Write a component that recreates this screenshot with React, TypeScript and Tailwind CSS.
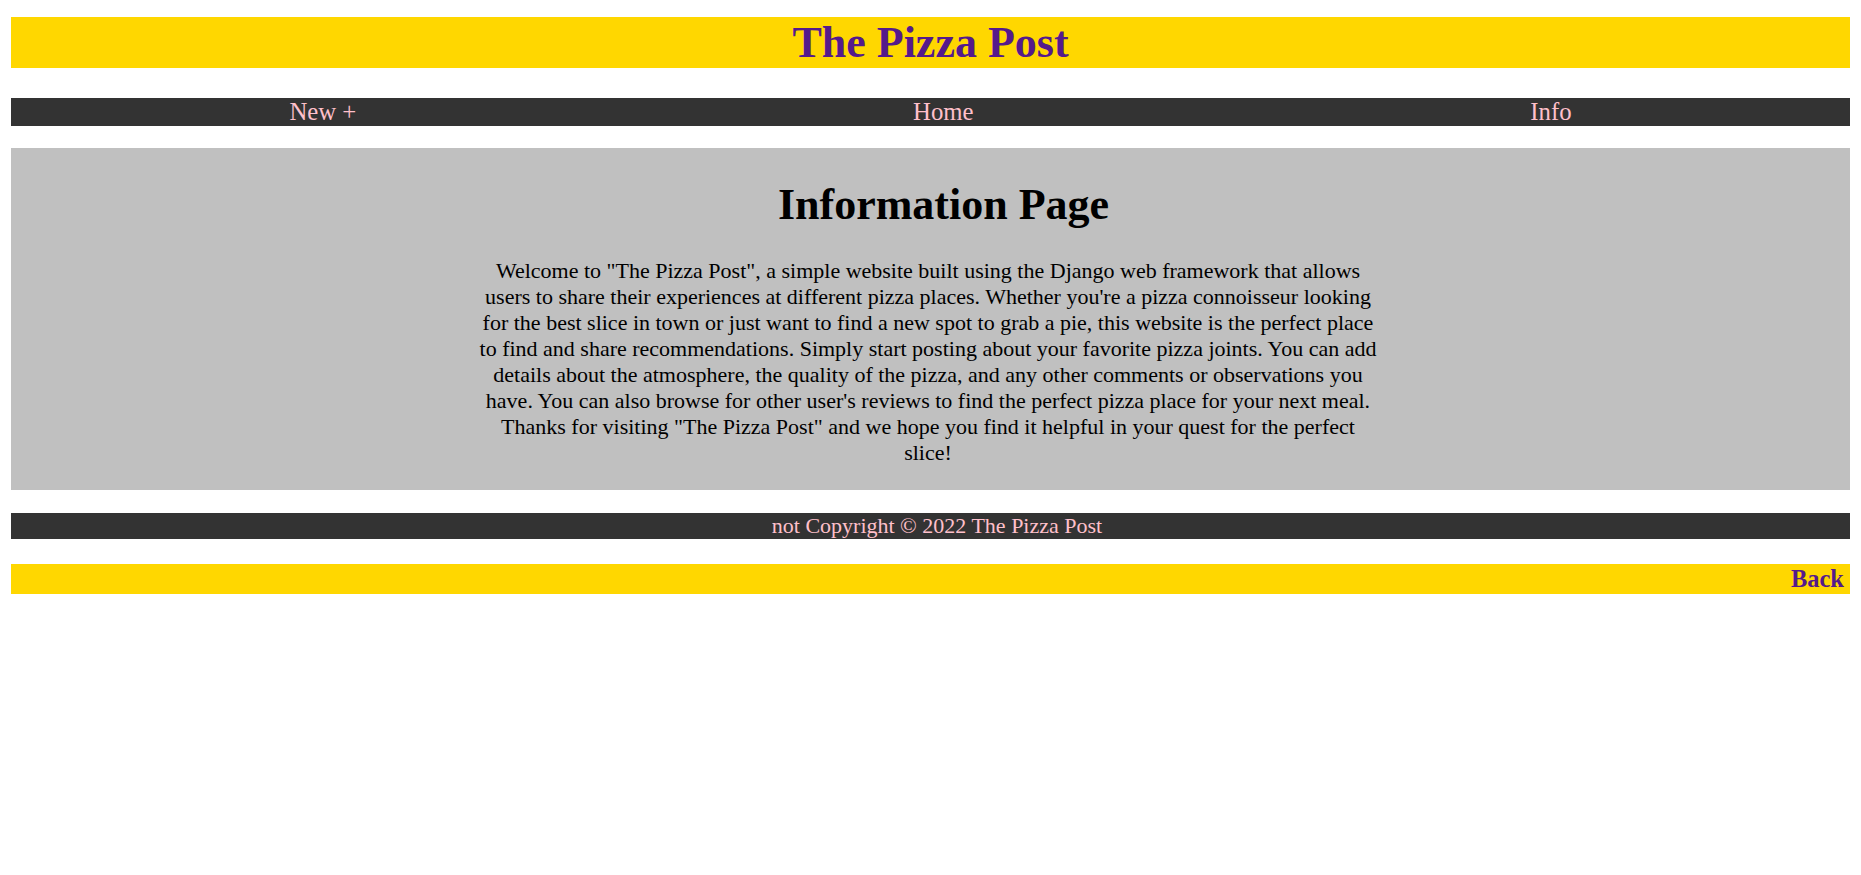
/*
 * The Pizza Post - Information page
 */
const serif = "font-['Liberation_Serif','Times_New_Roman',serif]";

const navLinks = ["New +", "Home", "Info"];

export default function App() {
  return (
    <div className={`min-h-screen bg-white px-[11px] pt-[17px] ${serif} leading-[normal]`}>
      {/* Header */}
      <header className="h-[51px] bg-[#ffd700] flex items-center justify-center">
        <h1 className="text-[44px] font-bold text-[#551a8b] leading-[normal]">The Pizza Post</h1>
      </header>

      {/* Nav */}
      <nav className="mt-[30px] h-[28px] bg-[#333333] flex items-center justify-around">
        {navLinks.map((link) => (
          <a key={link} className="text-[24.75px] text-[#ffc0cb] leading-[normal]">
            {link}
          </a>
        ))}
      </nav>

      {/* Content */}
      <main className="mt-[22px] h-[342px] bg-[#c0c0c0] pt-[31px]">
        <h2 className="pl-[26px] text-center text-[44px] font-bold text-black leading-[normal]">Information Page</h2>
        <div className="pr-[5px]">
          <p className="mx-auto mt-[28px] w-[906px] text-center text-[22px] text-black leading-[normal]">
            Welcome to "The Pizza Post", a simple website built using the Django web framework that allows
            users to share their experiences at different pizza places. Whether you're a pizza connoisseur
            looking for the best slice in town or just want to find a new spot to grab a pie, this website is
            the perfect place to find and share recommendations. Simply start posting about your favorite
            pizza joints. You can add details about the atmosphere, the quality of the pizza, and any other
            comments or observations you have. You can also browse for other user's reviews to find the
            perfect pizza place for your next meal. Thanks for visiting "The Pizza Post" and we hope you find
            it helpful in your quest for the perfect slice!
          </p>
        </div>
      </main>

      {/* Footer */}
      <footer className="mt-[23px] h-[26px] bg-[#333333] flex items-center justify-center pl-[13px]">
        <span className="text-[22px] text-[#ffc0cb] leading-[normal]">not Copyright © 2022 The Pizza Post</span>
      </footer>

      {/* Back bar */}
      <div className="mt-[25px] h-[30px] bg-[#ffd700] flex items-center justify-end pr-[6px]">
        <a className="text-[24.5px] font-bold text-[#551a8b] leading-[normal]">Back</a>
      </div>
    </div>
  );
}
